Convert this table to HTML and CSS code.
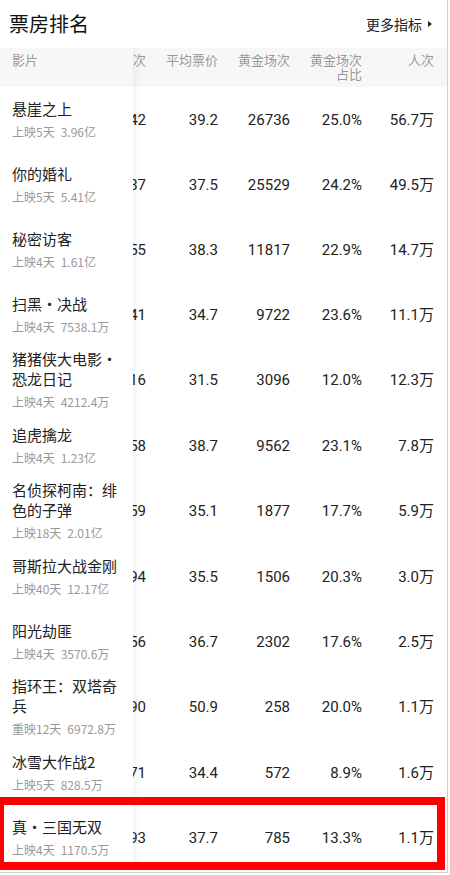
FILE: index.html
```html
<!DOCTYPE html>
<html lang="zh-CN">
<head>
<meta charset="utf-8">
<title>票房排名</title>
<link rel="stylesheet" href="styles.css">
</head>
<body>
<div class="page">
  <div class="topbar">
    <h1 class="title">票房排名</h1>
    <a class="more">更多指标<span class="tri"></span></a>
  </div>
  <div class="table">
    <div class="row head">
      <div class="name"><span class="hname">影片</span></div>
      <div class="cells">
        <div class="track">
          <div class="c">排片场次</div>
          <div class="c">平均票价</div>
          <div class="c">黄金场次</div>
          <div class="c">黄金场次占比</div>
          <div class="c">人次</div>
        </div>
      </div>
    </div>

    <div class="row"><div class="name"><div class="film">悬崖之上</div><div class="sub">上映5天<span class="gross">3.96亿</span></div></div><div class="cells"><div class="track"><div class="c">42</div><div class="c">39.2</div><div class="c">26736</div><div class="c">25.0%</div><div class="c">56.7万</div></div></div></div>
    <div class="row"><div class="name"><div class="film">你的婚礼</div><div class="sub">上映5天<span class="gross">5.41亿</span></div></div><div class="cells"><div class="track"><div class="c">37</div><div class="c">37.5</div><div class="c">25529</div><div class="c">24.2%</div><div class="c">49.5万</div></div></div></div>
    <div class="row"><div class="name"><div class="film">秘密访客</div><div class="sub">上映4天<span class="gross">1.61亿</span></div></div><div class="cells"><div class="track"><div class="c">55</div><div class="c">38.3</div><div class="c">11817</div><div class="c">22.9%</div><div class="c">14.7万</div></div></div></div>
    <div class="row"><div class="name"><div class="film">扫黑·决战</div><div class="sub">上映4天<span class="gross">7538.1万</span></div></div><div class="cells"><div class="track"><div class="c">41</div><div class="c">34.7</div><div class="c">9722</div><div class="c">23.6%</div><div class="c">11.1万</div></div></div></div>
    <div class="row"><div class="name"><div class="film">猪猪侠大电影·恐龙日记</div><div class="sub">上映4天<span class="gross">4212.4万</span></div></div><div class="cells"><div class="track"><div class="c">16</div><div class="c">31.5</div><div class="c">3096</div><div class="c">12.0%</div><div class="c">12.3万</div></div></div></div>
    <div class="row"><div class="name"><div class="film">追虎擒龙</div><div class="sub">上映4天<span class="gross">1.23亿</span></div></div><div class="cells"><div class="track"><div class="c">58</div><div class="c">38.7</div><div class="c">9562</div><div class="c">23.1%</div><div class="c">7.8万</div></div></div></div>
    <div class="row"><div class="name"><div class="film">名侦探柯南：绯色的子弹</div><div class="sub">上映18天<span class="gross">2.01亿</span></div></div><div class="cells"><div class="track"><div class="c">59</div><div class="c">35.1</div><div class="c">1877</div><div class="c">17.7%</div><div class="c">5.9万</div></div></div></div>
    <div class="row"><div class="name"><div class="film">哥斯拉大战金刚</div><div class="sub">上映40天<span class="gross">12.17亿</span></div></div><div class="cells"><div class="track"><div class="c">94</div><div class="c">35.5</div><div class="c">1506</div><div class="c">20.3%</div><div class="c">3.0万</div></div></div></div>
    <div class="row"><div class="name"><div class="film">阳光劫匪</div><div class="sub">上映4天<span class="gross">3570.6万</span></div></div><div class="cells"><div class="track"><div class="c">56</div><div class="c">36.7</div><div class="c">2302</div><div class="c">17.6%</div><div class="c">2.5万</div></div></div></div>
    <div class="row"><div class="name"><div class="film">指环王：双塔奇兵</div><div class="sub">重映12天<span class="gross">6972.8万</span></div></div><div class="cells"><div class="track"><div class="c">90</div><div class="c">50.9</div><div class="c">258</div><div class="c">20.0%</div><div class="c">1.1万</div></div></div></div>
    <div class="row"><div class="name"><div class="film">冰雪大作战2</div><div class="sub">上映5天<span class="gross">828.5万</span></div></div><div class="cells"><div class="track"><div class="c">71</div><div class="c">34.4</div><div class="c">572</div><div class="c">8.9%</div><div class="c">1.6万</div></div></div></div>
    <div class="row"><div class="name"><div class="film">真·三国无双</div><div class="sub">上映4天<span class="gross">1170.5万</span></div></div><div class="cells"><div class="track"><div class="c">93</div><div class="c">37.7</div><div class="c">785</div><div class="c">13.3%</div><div class="c">1.1万</div></div></div></div>
  </div>
  <div class="highlight"></div>
</div>
</body>
</html>
```

FILE: styles.css
```css
html, body {
  margin: 0;
  padding: 0;
  background: #fff;
  overflow: hidden;
}

body {
  font-family: "Noto Sans CJK SC", "Noto Sans", sans-serif;
  color: #222;
}

.page {
  position: relative;
  width: 447px;
  height: 872px;
  border-right: 1px solid #cfcfcf;
  border-bottom: 1px solid #cfcfcf;
  overflow: hidden;
  background: #fff;
}

.topbar {
  height: 48px;
  display: flex;
  align-items: center;
  justify-content: space-between;
  padding: 0 15px 0 9px;
}

.title {
  margin: 0;
  font-size: 20px;
  font-weight: 400;
  line-height: 28px;
  color: #111;
}

.more {
  display: flex;
  align-items: center;
  font-size: 14px;
  line-height: 20px;
  color: #222;
}

.tri {
  width: 0;
  height: 0;
  margin-left: 6px;
  border-top: 3px solid transparent;
  border-bottom: 3px solid transparent;
  border-left: 4px solid #222;
}

.table {
  display: flex;
  flex-direction: column;
}

.row {
  display: flex;
  align-items: stretch;
}

.name {
  width: 133px;
  flex: none;
  box-sizing: border-box;
  padding: 2px 9px 2px 12px;
  min-height: 65px;
  display: flex;
  flex-direction: column;
  justify-content: center;
  background: #fff;
  position: relative;
  z-index: 1;
}

.name::after {
  content: "";
  position: absolute;
  top: 0;
  bottom: 0;
  right: -8px;
  width: 8px;
  background: linear-gradient(to right, rgba(0, 0, 0, 0.045), rgba(0, 0, 0, 0));
}

.film {
  font-size: 15px;
  line-height: 20px;
  color: #222;
}

.sub {
  margin-top: 4px;
  font-size: 12px;
  line-height: 18px;
  color: #999;
}

.gross {
  margin-left: 6px;
}

.cells {
  flex: 1;
  overflow: hidden;
  display: flex;
  align-items: center;
}

.track {
  display: flex;
  flex: none;
  margin-left: -59px;
}

.c {
  width: 72px;
  flex: none;
  text-align: right;
  font-family: Roboto, "Noto Sans CJK SC", sans-serif;
  font-size: 15px;
  line-height: 20px;
  color: #222;
}

.head {
  background: #f7f7f7;
  height: 39px;
}

.head .name {
  min-height: 0;
  background: #f7f7f7;
  justify-content: flex-start;
  padding-top: 5px;
}

.hname {
  font-size: 13px;
  line-height: 14px;
  color: #999;
}

.head .cells {
  align-items: flex-start;
  padding-top: 5px;
}

.head .c {
  font-family: "Noto Sans CJK SC", sans-serif;
  font-size: 13px;
  line-height: 14px;
  color: #999;
  box-sizing: border-box;
  padding-left: 16px;
}

.highlight {
  position: absolute;
  left: -4px;
  top: 797px;
  width: 449px;
  height: 73px;
  box-sizing: border-box;
  border: 8px solid #ff0000;
  pointer-events: none;
  z-index: 2;
}
```
